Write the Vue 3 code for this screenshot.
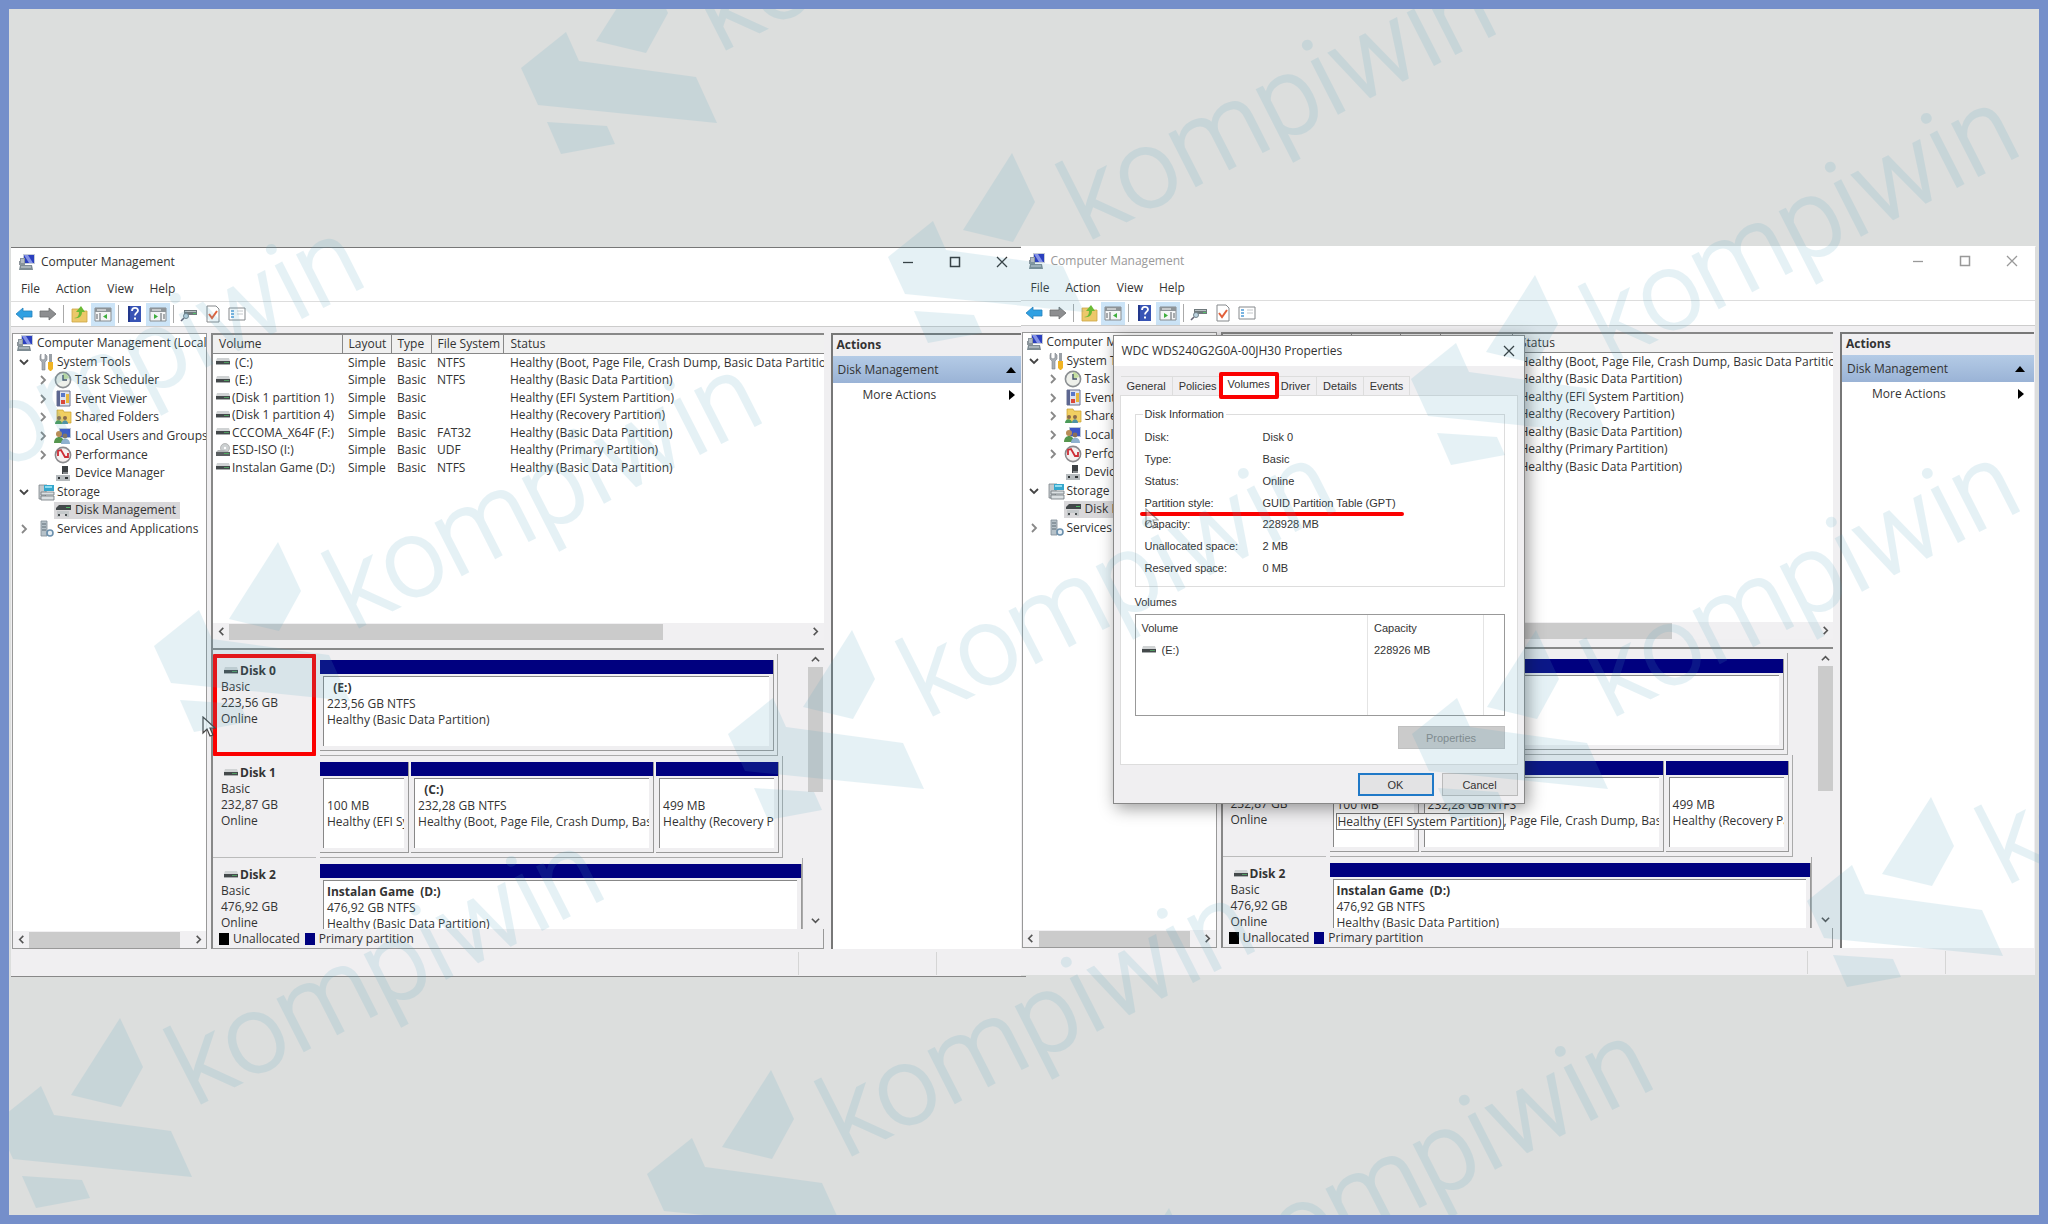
<script setup>
const windows = [
  { id: 'local', active: true },
  { id: 'props', active: false }
]

const menus = ['File', 'Action', 'View', 'Help']

const tools = [
  { icon: 'back', label: 'Back' },
  { icon: 'forward', label: 'Forward' },
  { sep: true },
  { icon: 'folder-up', label: 'Up one level' },
  { icon: 'pane-left', label: 'Show or hide console tree', on: true },
  { sep: true },
  { icon: 'help', label: 'Help' },
  { icon: 'pane-right', label: 'Show or hide action pane', on: true },
  { sep: true },
  { icon: 'device', label: 'Rescan disks' },
  { icon: 'check', label: 'Properties' },
  { icon: 'list', label: 'Settings' }
]

const tree = [
  { level: 0, icon: 'computer', label: 'Computer Management (Local' },
  { level: 1, icon: 'tools', label: 'System Tools', arrow: 'open' },
  { level: 2, icon: 'clock', label: 'Task Scheduler', arrow: 'closed' },
  { level: 2, icon: 'events', label: 'Event Viewer', arrow: 'closed' },
  { level: 2, icon: 'shared', label: 'Shared Folders', arrow: 'closed' },
  { level: 2, icon: 'users', label: 'Local Users and Groups', arrow: 'closed' },
  { level: 2, icon: 'perf', label: 'Performance', arrow: 'closed' },
  { level: 2, icon: 'devmgr', label: 'Device Manager' },
  { level: 1, icon: 'storage', label: 'Storage', arrow: 'open' },
  { level: 2, icon: 'diskmgmt', label: 'Disk Management', selected: true },
  { level: 1, icon: 'services', label: 'Services and Applications', arrow: 'closed' }
]

const volumes = [
  { name: '\u00a0(C:)', fs: 'NTFS', status: 'Healthy (Boot, Page File, Crash Dump, Basic Data Partition)' },
  { name: '\u00a0(E:)', fs: 'NTFS', status: 'Healthy (Basic Data Partition)' },
  { name: '(Disk 1 partition 1)', fs: '', status: 'Healthy (EFI System Partition)' },
  { name: '(Disk 1 partition 4)', fs: '', status: 'Healthy (Recovery Partition)' },
  { name: 'CCCOMA_X64F (F:)', fs: 'FAT32', status: 'Healthy (Basic Data Partition)' },
  { name: 'ESD-ISO (I:)', fs: 'UDF', status: 'Healthy (Primary Partition)', icon: 'cd' },
  { name: 'Instalan Game (D:)', fs: 'NTFS', status: 'Healthy (Basic Data Partition)' }
]

const disks = [
  {
    name: 'Disk 0', size: '223,56 GB', width: 94,
    parts: [{ share: 1, title: '\u00a0\u00a0(E:)', size: '223,56 GB NTFS', status: 'Healthy (Basic Data Partition)' }]
  },
  {
    name: 'Disk 1', size: '232,87 GB', width: 95,
    parts: [
      { share: 88, title: '\u00a0', size: '100 MB', status: 'Healthy (EFI System Partition)' },
      { share: 242, title: '\u00a0\u00a0(C:)', size: '232,28 GB NTFS', status: 'Healthy (Boot, Page File, Crash Dump, Basic Data Partition)' },
      { share: 122, title: '\u00a0', size: '499 MB', status: 'Healthy (Recovery Partition)' }
    ]
  },
  {
    name: 'Disk 2', size: '476,92 GB', width: 99,
    parts: [{ share: 1, title: 'Instalan Game\u00a0 (D:)', size: '476,92 GB NTFS', status: 'Healthy (Basic Data Partition)' }]
  }
]

const tabs = ['General', 'Policies', 'Volumes', 'Driver', 'Details', 'Events']

const info = [
  ['Disk:', 'Disk 0'],
  ['Type:', 'Basic'],
  ['Status:', 'Online'],
  ['Partition style:', 'GUID Partition Table (GPT)'],
  ['Capacity:', '228928 MB'],
  ['Unallocated space:', '2 MB'],
  ['Reserved space:', '0 MB']
]

const marks = [
  [566, 32], [933, 221], [-199, 474], [199, 610], [1456, 343], [773, 698],
  [1457, 698], [1852, 865], [41, 1086], [692, 1138], [1090, 1276]
]
</script>

<template>
  <svg class="defs" width="0" height="0" aria-hidden="true">
    <symbol id="i-computer" viewBox="0 0 18 18">
      <path d="M1 8h5v4H1z" fill="#8c9399" />
      <path d="M5 1h12v10H5z" fill="#c5ccd6" /><path d="M6 2h10v8H6z" fill="#2a3fbe" />
      <path d="M6 2h4l5 8h-4z" fill="#8593e6" />
      <path d="M2 5h5v12H2z" fill="#8a959c" /><path d="M3 7h3M3 9h3" stroke="#dfe4e8" />
      <path d="M2 12h12l1 5H1z" fill="#7e8c93" /><path d="M3 14h10" stroke="#d3dade" />
    </symbol>
    <symbol id="i-tools" viewBox="0 0 18 18">
      <path d="M4 1v5l2 1 2-1V1l2 2v4L8 9v8H5V9L3 7V3z" fill="#a9aeb3" stroke="#7c8186" stroke-width=".6" />
      <path d="M12 1h3v8h-3z" fill="#9aa0a6" /><path d="M11 9h5v7l-2 2h-1l-2-2z" fill="#f0b323" />
    </symbol>
    <symbol id="i-clock" viewBox="0 0 18 18">
      <circle cx="9" cy="9" r="7.6" fill="#eef0ea" stroke="#8b8f92" stroke-width="1.6" />
      <path d="M9 9V2a7 7 0 0 1 6 5z" fill="#c5dfa0" /><path d="M9 4v5h4" fill="none" stroke="#45536a" stroke-width="1.4" />
    </symbol>
    <symbol id="i-events" viewBox="0 0 18 18">
      <path d="M3 1h13v15H3z" fill="#dfe3ee" stroke="#6a7390" /><path d="M3 1h3v15H3z" fill="#5d6791" />
      <path d="M7 3h4v4H7z" fill="#5977c8" /><path d="M7 10h4v4H7z" fill="#d9483b" /><path d="M12 4h3v9h-3z" fill="#e9b93c" />
    </symbol>
    <symbol id="i-shared" viewBox="0 0 18 18">
      <path d="M3 2h6l1 2h7v11H3z" fill="#f1cf62" stroke="#c79d2d" stroke-width=".7" />
      <circle cx="5" cy="10" r="2" fill="#8a6c4e" /><circle cx="11" cy="10" r="2" fill="#8a6c4e" />
      <path d="M1 16c0-5 7-5 7 0z" fill="#4b9a59" /><path d="M8 16c0-5 6-5 6 0z" fill="#4f92a5" />
    </symbol>
    <symbol id="i-users" viewBox="0 0 18 18">
      <path d="M5 1h12v10H5z" fill="#b9c4d4" /><path d="M6 2h10v8H6z" fill="#3d55c6" />
      <circle cx="5" cy="7" r="3" fill="#b98d57" /><path d="M0 16c0-8 10-8 10 0z" fill="#56964e" />
      <circle cx="11" cy="9" r="2.4" fill="#8b6f58" /><path d="M7 17c0-7 9-7 9 0z" fill="#8fb1cf" />
    </symbol>
    <symbol id="i-perf" viewBox="0 0 18 18">
      <circle cx="9" cy="9" r="7.6" fill="#f5efef" stroke="#8b8b8e" stroke-width="1.6" />
      <path d="M4 10V5l3-1 4 7 3 0V7" fill="none" stroke="#cd2d35" stroke-width="1.8" />
    </symbol>
    <symbol id="i-devmgr" viewBox="0 0 18 18">
      <path d="M8 2h6v8H8z" fill="#3d4144" /><path d="M2 11h14v6H2z" fill="#b5babd" />
      <path d="M4 13h2v2H4zM11 13h3v2h-3z" fill="#303538" /><path d="M9 8h5v2H9z" fill="#85898c" />
    </symbol>
    <symbol id="i-storage" viewBox="0 0 18 18">
      <path d="M2 2h8l-2 14H2z" fill="#c3c9cc" stroke="#7f868a" stroke-width=".8" />
      <path d="M7 2h10v6H7z" fill="#35a7cd" /><path d="M8 3h7v2H8z" fill="#8fdcf0" />
      <path d="M4 9h13v3H4zM4 13h13v4H4z" fill="#dbe0e2" stroke="#6f777b" stroke-width=".8" />
    </symbol>
    <symbol id="i-diskmgmt" viewBox="0 0 18 18">
      <path d="M2 7l3-3h12v5H2z" fill="#44494b" /><path d="M12 6h4v1h-4z" fill="#52b866" />
      <path d="M3 10h12v6h-3v-3H6v3H3z" fill="#c4c8ca" /><path d="M4 13h2v2H4zM11 13h2v2h-2z" fill="#494e50" />
    </symbol>
    <symbol id="i-services" viewBox="0 0 18 18">
      <path d="M4 1h6v15H4z" fill="#b6c1c8" stroke="#7f8c94" stroke-width=".8" /><path d="M5 4h4M5 7h4M5 10h4" stroke="#5f6d76" />
      <circle cx="13" cy="13" r="3" fill="#e6eef4" stroke="#6b90ad" stroke-width="1.6" />
    </symbol>
    <symbol id="i-drive" viewBox="0 0 14 8">
      <path d="M1 0h12l1 3H0z" fill="#d0d3d4" /><path d="M0 3h14v3H0z" fill="#44494b" /><path d="M8 4h5v1H8z" fill="#4f9a60" />
      <path d="M0 6h14v1H0z" fill="#a8acad" />
    </symbol>
    <symbol id="i-cd" viewBox="0 0 14 14">
      <circle cx="9" cy="5" r="4.5" fill="#ccd0d1" stroke="#999" stroke-width=".6" /><circle cx="9" cy="5" r="1.2" fill="#fff" />
      <path d="M2 7h6l6 2H0z" fill="#b5b9ba" /><path d="M0 9h14v4H0z" fill="#5b6062" /><path d="M8 10h5v1H8z" fill="#4fa860" />
    </symbol>
    <symbol id="i-back" viewBox="0 0 18 18"><path d="M1 9l7-6v3h9v6H8v3z" fill="#2fa0e2" stroke="#2784bd" stroke-width=".8" /></symbol>
    <symbol id="i-forward" viewBox="0 0 18 18"><path d="M17 9l-7-6v3H1v6h9v3z" fill="#8d8e90" stroke="#6d6e70" stroke-width=".8" /></symbol>
    <symbol id="i-folder-up" viewBox="0 0 18 18">
      <path d="M2 4h8l1 2h6v11H2z" fill="#ecc86a" stroke="#cda544" stroke-width=".8" />
      <path d="M4 13c4 0 5-3 5-6H6l5-6 4 6h-3c0 4-3 7-8 6z" fill="#6cbb35" />
    </symbol>
    <symbol id="i-pane-left" viewBox="0 0 18 18">
      <path d="M1 3h16v13H1z" fill="#f4f5f6" stroke="#878c90" /><path d="M1 3h16v4H1z" fill="#8e9498" /><path d="M3 5h9" stroke="#fff" />
      <path d="M3 9v5M6 8v8" stroke="#878c90" stroke-width="1.4" /><path d="M13 9v5l-4-2.500z" fill="#3fae3c" />
    </symbol>
    <symbol id="i-pane-right" viewBox="0 0 18 18">
      <path d="M1 3h16v13H1z" fill="#f4f5f6" stroke="#878c90" /><path d="M1 3h16v4H1z" fill="#8e9498" /><path d="M3 5h9" stroke="#fff" />
      <path d="M15 9v5M12 8v8" stroke="#878c90" stroke-width="1.4" /><path d="M5 9v5l4-2.500z" fill="#3fae3c" />
    </symbol>
    <symbol id="i-help" viewBox="0 0 18 18">
      <path d="M3 1h13v16H3z" fill="#3854b5" /><path d="M3 1h2v16H3z" fill="#22378c" />
      <path d="M7 6c0-4 6-4 6-.500 0 2-3 2.500-3 5" fill="none" stroke="#fff" stroke-width="1.800" /><path d="M9 12.500h2v2H9z" fill="#fff" />
    </symbol>
    <symbol id="i-device" viewBox="0 0 18 18">
      <path d="M4 5h13v5H4z" fill="#6f797c" /><path d="M5 6h11v1H5z" fill="#b8c1c4" /><path d="M13 8h3v1h-3z" fill="#56c46b" />
      <circle cx="6" cy="11" r="2.500" fill="#bcd3e0" stroke="#74848c" /><path d="M4 13l-3 3" stroke="#667" stroke-width="1.600" />
    </symbol>
    <symbol id="i-check" viewBox="0 0 18 18">
      <path d="M3 1h9l3 3v13H3z" fill="#fff" stroke="#85898c" /><path d="M5 9l3 4 5-7" fill="none" stroke="#e2603a" stroke-width="2" />
    </symbol>
    <symbol id="i-list" viewBox="0 0 18 18">
      <path d="M1 3h16v12H1z" fill="#fff" stroke="#85898c" /><path d="M3 6h3M3 9h3M3 12h3" stroke="#4f9cd8" stroke-width="1.400" />
      <path d="M9 6h6M9 9h6" stroke="#c4c8cb" />
    </symbol>
    <symbol id="i-left" viewBox="0 0 10 10"><path d="M7 1L3 5l4 4" fill="none" stroke="currentColor" stroke-width="1.800" /></symbol>
    <symbol id="i-right" viewBox="0 0 10 10"><path d="M3 1l4 4-4 4" fill="none" stroke="currentColor" stroke-width="1.800" /></symbol>
    <symbol id="i-up" viewBox="0 0 10 10"><path d="M1 7l4-4 4 4" fill="none" stroke="currentColor" stroke-width="1.800" /></symbol>
    <symbol id="i-down" viewBox="0 0 10 10"><path d="M1 3l4 4 4-4" fill="none" stroke="currentColor" stroke-width="1.800" /></symbol>
    <symbol id="i-close" viewBox="0 0 12 12"><path d="M1 1l10 10M11 1L1 11" stroke="currentColor" stroke-width="1.300" /></symbol>
    <symbol id="i-max" viewBox="0 0 12 12"><path d="M1.500 1.500h9v9h-9z" fill="none" stroke="currentColor" stroke-width="1.500" /></symbol>
    <symbol id="i-min" viewBox="0 0 12 12"><path d="M1 6.500h10" stroke="currentColor" stroke-width="1.300" /></symbol>
    <symbol id="i-pointer" viewBox="0 0 14 22">
      <path d="M1 1v16l4-4 3 7 3-1-3-7h5z" fill="#fff" fill-opacity=".8" stroke="#444" stroke-width="1.200" />
    </symbol>
  </svg>

  <main class="page">
    <div class="windows">
      <section v-for="w in windows" :key="w.id" class="window" :class="{ inactive: !w.active }">
        <header class="titlebar">
          <svg class="ico"><use href="#i-computer" /></svg>
          <h1>Computer Management</h1>
          <div class="controls">
            <button type="button" aria-label="Minimize"><svg><use href="#i-min" /></svg></button>
            <button type="button" aria-label="Maximize"><svg><use href="#i-max" /></svg></button>
            <button type="button" aria-label="Close"><svg><use href="#i-close" /></svg></button>
          </div>
        </header>

        <nav class="menubar">
          <button v-for="m in menus" :key="m" type="button">{{ m }}</button>
        </nav>

        <div class="toolbar">
          <template v-for="(t, i) in tools" :key="i">
            <span v-if="t.sep" class="sep"></span>
            <button v-else type="button" :class="{ on: t.on }" :aria-label="t.label">
              <svg class="tool"><use :href="'#i-' + t.icon" /></svg>
            </button>
          </template>
        </div>

        <div class="body">
          <aside class="treepane">
            <ul class="tree">
              <li v-for="n in tree" :key="n.label" :class="'level' + n.level">
                <svg v-if="n.arrow" class="arrow" :class="n.arrow"><use :href="n.arrow === 'open' ? '#i-down' : '#i-right'" /></svg>
                <span v-else-if="n.level" class="arrow"></span>
                <span class="node" :class="{ selected: n.selected }">
                  <svg class="ico"><use :href="'#i-' + n.icon" /></svg>
                  <span>{{ n.label }}</span>
                </span>
              </li>
            </ul>
            <div class="hscroll">
              <button type="button" aria-label="Scroll left"><svg><use href="#i-left" /></svg></button>
              <div class="track"><div class="thumb wide"></div></div>
              <button type="button" aria-label="Scroll right"><svg><use href="#i-right" /></svg></button>
            </div>
          </aside>

          <div class="center">
            <div class="listpane">
              <table class="volumes">
                <colgroup><col class="c-name"><col class="c-layout"><col class="c-type"><col class="c-fs"><col></colgroup>
                <thead>
                  <tr><th>Volume</th><th>Layout</th><th>Type</th><th>File System</th><th>Status</th></tr>
                </thead>
                <tbody>
                  <tr v-for="v in volumes" :key="v.name">
                    <td><span class="vol"><svg :class="v.icon || 'drive'"><use :href="'#i-' + (v.icon || 'drive')" /></svg>{{ v.name }}</span></td>
                    <td>Simple</td><td>Basic</td><td>{{ v.fs }}</td><td>{{ v.status }}</td>
                  </tr>
                </tbody>
              </table>
              <div class="hscroll">
                <button type="button" aria-label="Scroll left"><svg><use href="#i-left" /></svg></button>
                <div class="track"><div class="thumb"></div></div>
                <button type="button" aria-label="Scroll right"><svg><use href="#i-right" /></svg></button>
              </div>
            </div>

            <div class="diskpane">
              <div class="disks">
                <div v-for="(d, di) in disks" :key="d.name" class="disk">
                  <div class="label" :class="{ marked: w.active && di === 0 }">
                    <b><svg class="drive"><use href="#i-drive" /></svg>{{ d.name }}</b>
                    <span>Basic</span><span>{{ d.size }}</span><span>Online</span>
                  </div>
                  <div class="lane">
                    <div class="graph" :style="{ width: d.width + '%' }">
                      <div v-for="(p, pi) in d.parts" :key="pi" class="part" :style="{ flexGrow: p.share }">
                        <div class="bar"></div>
                        <div class="frame">
                          <div class="box"><b>{{ p.title }}</b><span>{{ p.size }}</span><span>{{ p.status }}</span></div>
                        </div>
                      </div>
                    </div>
                  </div>
                </div>
              </div>
              <div class="vscroll">
                <button type="button" aria-label="Scroll up"><svg><use href="#i-up" /></svg></button>
                <div class="track"><div class="thumb"></div></div>
                <button type="button" aria-label="Scroll down"><svg><use href="#i-down" /></svg></button>
              </div>
            </div>
            <div class="legend"><i></i><span>Unallocated</span><i class="primary"></i><span>Primary partition</span></div>
          </div>

          <aside class="actions">
            <h2>Actions</h2>
            <button type="button" class="group"><span>Disk Management</span><svg viewBox="0 0 10 6"><path d="M0 6l5-6 5 6z" /></svg></button>
            <button type="button" class="more"><span>More Actions</span><svg viewBox="0 0 6 10"><path d="M0 0l6 5-6 5z" /></svg></button>
          </aside>
        </div>

        <footer class="status"><span></span><span></span></footer>

        <svg v-if="w.active" class="pointer at-disk"><use href="#i-pointer" /></svg>

        <template v-else>
          <div class="tip">Healthy (EFI System Partition)</div>
          <div class="dialog" role="dialog" aria-labelledby="dlg-title">
            <header>
              <h2 id="dlg-title">WDC WDS240G2G0A-00JH30 Properties</h2>
              <button type="button" aria-label="Close dialog"><svg><use href="#i-close" /></svg></button>
            </header>
            <div class="tabs" role="tablist">
              <button v-for="t in tabs" :key="t" type="button" role="tab" :class="{ current: t === 'Volumes' }">{{ t }}</button>
            </div>
            <div class="sheet">
              <fieldset>
                <legend>Disk Information</legend>
                <dl>
                  <div v-for="r in info" :key="r[0]"><dt>{{ r[0] }}</dt><dd>{{ r[1] }}</dd></div>
                </dl>
                <div class="underline"></div>
                <svg class="pointer at-style"><use href="#i-pointer" /></svg>
              </fieldset>
              <h3>Volumes</h3>
              <div class="listbox">
                <table>
                  <colgroup><col><col class="cap"><col class="rest"></colgroup>
                  <thead><tr><th>Volume</th><th>Capacity</th><th></th></tr></thead>
                  <tbody>
                    <tr><td><span class="vol"><svg class="drive"><use href="#i-drive" /></svg>(E:)</span></td><td>228926 MB</td><td></td></tr>
                    <tr class="fill"><td></td><td></td><td></td></tr>
                  </tbody>
                </table>
              </div>
              <button type="button" class="props" disabled>Properties</button>
            </div>
            <footer>
              <button type="button" class="ok">OK</button>
              <button type="button">Cancel</button>
            </footer>
          </div>
        </template>
      </section>
    </div>

    <svg class="watermark" aria-hidden="true">
      <g v-for="(m, i) in marks" :key="i" :transform="`translate(${m[0]} ${m[1]})`">
        <path d="M79-68l23 49-22 40-50-12zM0 0l13 29 117 16 21 46-179-18-17-37zM-19 90l60 4 8 18-54 10z" />
        <text transform="translate(153 21) rotate(-27)">kompiwin</text>
      </g>
    </svg>
  </main>
</template>

<style>
body { margin: 0; }
</style>

<style scoped>
.defs { position: absolute; }
.page {
  position: relative;
  box-sizing: border-box;
  min-height: 100vh;
  padding: 0 3px 0 2px;
  border: 9px solid #758fca;
  background: #dcdedd;
  display: flex;
  flex-direction: column;
  justify-content: center;
  overflow: hidden;
  font: 12px/16px "Open Sans", "Noto Sans", sans-serif;
  color: #333;
}
button {
  font: inherit;
  color: inherit;
  background: none;
  border: 0;
  padding: 0;
  margin: 0;
}
h1, h2, h3 { font: inherit; margin: 0; }
svg { display: block; flex: none; }

.windows { display: flex; align-items: flex-start; }
.window {
  position: relative;
  flex: 1 1 0;
  min-width: 0;
  background: #f0eff1;
  border-top: 1px solid #777;
  border-bottom: 1px solid #888;
}
.window.inactive {
  margin: -1px 0 0 -5px;
  border-color: #fff;
  border-bottom-color: #dcdedd;
  border-right: 1px solid #ddd;
}

.titlebar { display: flex; align-items: center; height: 28px; background: #fff; padding-left: 7px; }
.ico { width: 18px; height: 18px; }
.titlebar h1 { margin-left: 5px; }
.inactive .titlebar { color: #999; }
.controls { display: flex; margin-left: auto; }
.controls button { width: 47px; display: flex; justify-content: center; }
.controls svg { width: 12px; height: 12px; }

.menubar { display: flex; gap: 16px; height: 25px; padding-left: 10px; background: #fff; border-bottom: 1px solid #ddd; }

.toolbar { display: flex; align-items: center; height: 24px; background: #fff; border-bottom: 1px solid #ccc; padding-left: 1px; }
.toolbar button { width: 24px; height: 23px; display: flex; align-items: center; justify-content: center; }
.toolbar .on { background: #cce4f7; }
.tool { width: 18px; height: 18px; }
.sep { width: 1px; height: 18px; background: #aaa; margin: 0 3px; }

.body { display: flex; height: 616px; padding: 6px 1px 0; }
.treepane {
  width: 195px;
  box-sizing: border-box;
  margin-right: 4px;
  border: 1px solid #999;
  background: #fff;
  display: flex;
  flex-direction: column;
  overflow: hidden;
}
.tree { list-style: none; margin: 0; padding: 0; height: 204px; display: flex; flex-direction: column; }
.tree li { flex: 1; display: flex; align-items: center; white-space: nowrap; padding-left: 3px; }
.tree .level2 { padding-left: 22px; }
.arrow { width: 10px; height: 10px; margin: 0 8px 0 3px; color: #888; }
.arrow.open { color: #444; }
.level2 .arrow { margin-right: 6px; }
.node { display: flex; align-items: center; gap: 3px; padding-right: 4px; }
.level1 .node { gap: 2px; }
.node.selected { background: #d9d8da; height: 17px; }

.hscroll { display: flex; align-items: center; height: 17px; margin-top: auto; background: #f1f0f2; }
.hscroll button { width: 16px; display: flex; justify-content: center; color: #555; }
.hscroll svg, .vscroll svg { width: 9px; height: 9px; }
.hscroll .track { flex: 1; height: 16px; }
.thumb { background: #cbcbcb; width: 75%; height: 100%; }
.thumb.wide { width: 94%; }

.center {
  flex: 1;
  min-width: 0;
  margin-right: 7px;
  display: flex;
  flex-direction: column;
  box-sizing: border-box;
  border-left: 2px solid #888;
  border-top: 2px solid #888;
  border-bottom: 1px solid #999;
}
.listpane {
  height: 305px;
  display: flex;
  flex-direction: column;
  overflow: hidden;
  background: #fff;
  border-bottom: 8px solid #f0eff1;
}
.volumes { table-layout: fixed; border-collapse: collapse; width: 100%; }
.c-name { width: 129px; }
.c-layout { width: 49px; }
.c-type { width: 40px; }
.c-fs { width: 72px; }
.volumes th, .volumes td { padding: 0 0 0 6px; text-align: left; font-weight: normal; white-space: nowrap; overflow: hidden; }
.volumes thead tr { height: 18px; }
.volumes th { background: #f0f0f0; border-bottom: 1px solid #888; border-right: 1px solid #888; }
.volumes th:last-child { border-right: 0; }
.volumes td { height: 17px; line-height: 17px; }
.volumes tbody tr:nth-child(even) td { height: 18px; }
.volumes td:nth-child(1) { padding-left: 3px; }
.volumes td:last-child, .volumes th:last-child { padding-left: 7px; }
.vol { display: flex; align-items: center; gap: 3px; }
.volumes .vol { gap: 2px; }
.drive { width: 14px; height: 8px; }
.cd { width: 14px; height: 14px; }

.diskpane { display: flex; height: 279px; border-top: 2px solid #888; overflow: hidden; }
.disks { flex: 1; min-width: 0; padding-top: 4px; }
.disk { display: flex; height: 102px; }
.label {
  width: 103px;
  box-sizing: border-box;
  padding: 9px 0 0 8px;
  display: flex;
  flex-direction: column;
  border-bottom: 1px solid #bbb;
}
.label b { display: flex; align-items: center; gap: 2px; padding-left: 3px; }
.label.marked { outline: 4px solid #fb0000; outline-offset: -4px; border-radius: 1px; }
.lane { flex: 1; min-width: 0; padding-left: 4px; }
.graph {
  display: flex;
  gap: 2px;
  height: 102px;
  box-sizing: border-box;
  padding: 6px 3px 4px 0;
  border-right: 1px solid #aaa;
  border-bottom: 1px solid #aaa;
}
.disk:last-child .graph { padding-right: 0; }
.part { flex: 1 1 0; min-width: 0; display: flex; flex-direction: column; border-right: 1px solid #999; border-bottom: 1px solid #999; }
.bar { height: 14px; background: #00007f; }
.frame { flex: 1; min-height: 0; padding: 2px 4px 4px 3px; display: flex; }
.box {
  flex: 1;
  min-width: 0;
  background: #fff;
  border-left: 1px solid #888;
  border-top: 1px solid #888;
  padding: 3px 0 0 3px;
  display: flex;
  flex-direction: column;
  white-space: nowrap;
  overflow: hidden;
}
.vscroll { width: 16px; display: flex; flex-direction: column; align-items: center; padding: 5px 0 4px; box-sizing: border-box; color: #555; }
.vscroll .track { flex: 1; width: 15px; padding-top: 3px; }
.vscroll .thumb { width: 100%; height: 50%; }
.legend { display: flex; align-items: center; flex: 1; padding-left: 6px; border-right: 1px solid #999; }
.legend i { width: 10px; height: 12px; background: #000; margin-right: 4px; }
.legend .primary { background: #00007f; margin-left: 5px; }

.actions { width: 194px; background: #fff; box-sizing: border-box; border-left: 2px solid #777; border-top: 2px solid #777; }
.actions h2 { background: #f0eff1; height: 21px; line-height: 20px; padding-left: 4px; font-weight: bold; }
.actions button { display: flex; align-items: center; justify-content: space-between; width: 100%; height: 24px; padding: 0 9px 0 5px; }
.actions .group { background: linear-gradient(#b4cbe6, #9ab3d6); height: 27px; }
.actions .group svg { width: 10px; height: 6px; }
.actions .more { padding: 0 10px 0 30px; }
.actions .more svg { width: 6px; height: 10px; }

.status { height: 27px; display: flex; justify-content: flex-end; }
.status span { width: 138px; margin: 3px 0 1px; border-left: 1px solid #d5d5d5; box-sizing: border-box; }
.status span:last-child { width: 90px; }

.pointer { position: absolute; width: 14px; height: 22px; }
.at-disk { left: 191px; top: 468px; }

.tip {
  position: absolute;
  left: 315px;
  top: 566px;
  padding: 0 1px;
  border: 1px solid #777;
  background: #fff;
  line-height: 15px;
}
.dialog {
  position: absolute;
  left: 92px;
  top: 88px;
  width: 412px;
  height: 469px;
  box-sizing: border-box;
  border: 1px solid #888;
  background: #f0eff1;
  box-shadow: 3px 4px 16px rgba(0, 0, 0, .4);
  padding: 0 6px;
  font: 11px/14px "Liberation Sans", Arial, sans-serif;
}
.dialog header {
  display: flex;
  align-items: center;
  justify-content: space-between;
  height: 30px;
  margin: 0 -6px;
  padding: 0 9px 0 8px;
  background: #fff;
  font: 12px/16px "Open Sans", "Noto Sans", sans-serif;
}
.dialog header svg { width: 12px; height: 12px; }
.tabs { display: flex; height: 19px; margin-top: 10px; padding-left: 1px; }
.tabs button { padding: 0 6px; border: 1px solid #ddd; border-bottom: 0; border-left-width: 0; }
.tabs .current {
  position: relative;
  background: #fff;
  border: 4px solid #fb0000;
  border-radius: 2px;
  margin: -4px -4px -4px -5px;
  padding: 0 5px 4px;
}
.sheet { background: #fff; border: 1px solid #ddd; height: 370px; box-sizing: border-box; padding: 11px 12px 0 14px; display: flex; flex-direction: column; }
.sheet fieldset { position: relative; margin: 0; padding: 5px 0 7px 9px; border: 1px solid #ddd; min-width: 0; }
.sheet legend { padding: 0 2px; margin-left: -2px; }
.sheet dl { margin: 0; height: 153px; display: flex; flex-direction: column; }
.sheet dl div { flex: 1; display: flex; align-items: center; }
.sheet dt { width: 118px; }
.sheet dd { margin: 0; }
.underline { position: absolute; left: 4px; top: 91px; width: 264px; height: 4px; border-radius: 2px; background: #fb0000; }
.at-style { left: 9px; top: 87px; opacity: .5; }
.sheet h3 { margin: 8px 0 5px; }
.listbox { border: 1px solid #999; height: 102px; box-sizing: border-box; }
.listbox table { table-layout: fixed; border-collapse: collapse; width: 100%; height: 100%; }
.listbox th, .listbox td { font-weight: normal; text-align: left; padding: 0 0 0 6px; border-right: 1px solid #e4e4e4; height: 22px; }
.listbox thead th { height: 24px; padding-top: 2px; box-sizing: border-box; }
.listbox th:last-child, .listbox td:last-child { border-right: 0; padding: 0; }
.listbox .fill td { height: auto; }
.listbox .vol { gap: 6px; }
.cap { width: 116px; }
.rest { width: 20px; }
.sheet .props { align-self: flex-end; width: 107px; height: 23px; margin-top: 10px; background: #cbcbcb; border: 1px solid #c0c0c0; color: #888; }
.dialog footer { display: flex; justify-content: flex-end; gap: 8px; margin-top: 8px; }
.dialog footer button { width: 76px; height: 23px; background: #e3e3e4; border: 1px solid #bbb; }
.dialog footer .ok { border: 2px solid #2079c7; }

.watermark { position: absolute; inset: -9px; width: 100vw; height: calc(100% + 18px); pointer-events: none; fill: #50a4c0; opacity: .14; }
.watermark text { font: 300 110px Roboto, "Liberation Sans", sans-serif; stroke: #50a4c0; stroke-width: 2px; }
</style>
